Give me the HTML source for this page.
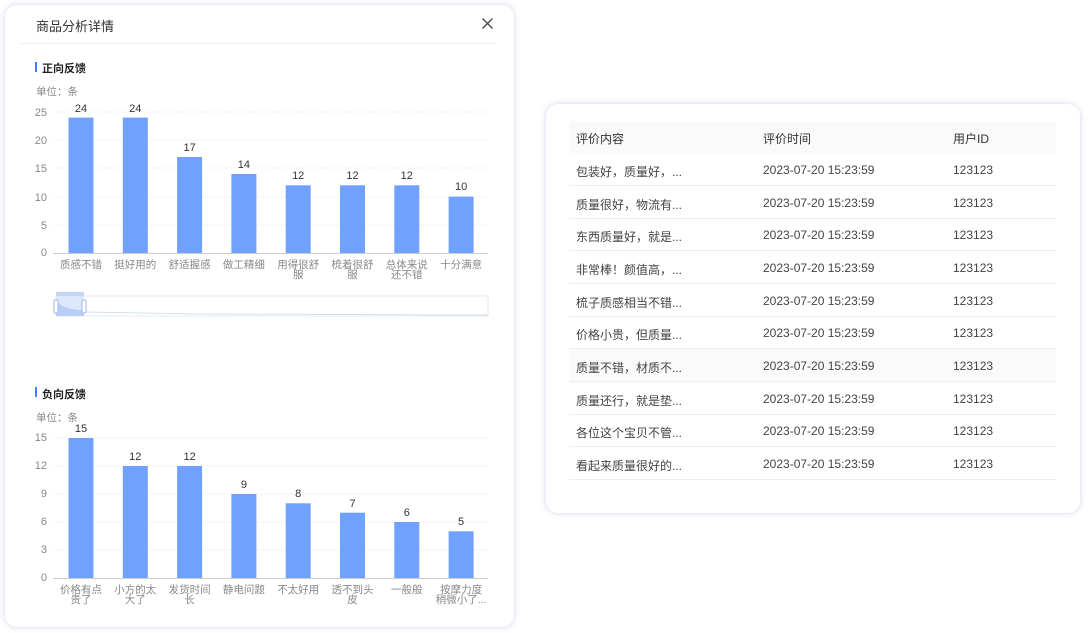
<!DOCTYPE html>
<html><head><meta charset="utf-8"><style>
*{margin:0;padding:0;box-sizing:border-box}
body{width:1088px;height:633px;background:#fff;font-family:"Liberation Sans","Noto Sans CJK SC",sans-serif;position:relative;overflow:hidden;color:#333}
.card{position:absolute;background:#fff;border-radius:12px;box-shadow:0 0 6px rgba(120,130,190,.35)}
.a{position:absolute;white-space:nowrap}
.row{position:absolute;left:569px;width:487px;height:33px;border-bottom:1px solid #eeeeee;font-size:12px;color:#444}
.row span{position:absolute;top:10px}
</style></head><body>
<div class="card" style="left:5px;top:5px;width:509px;height:622px"></div>
<div class="a" style="left:36px;top:16px;font-size:13px;color:#333">商品分析详情</div>
<svg class="a" style="left:481px;top:17px" width="13" height="13"><path d="M1.5 1.5L11.5 11.5M11.5 1.5L1.5 11.5" stroke="#444" stroke-width="1.3"/></svg>
<div class="a" style="left:20px;top:43px;width:476px;height:1px;background:#efefef"></div>
<div class="a" style="left:35px;top:62px;width:2px;height:10px;background:#3b7cff"></div>
<div class="a" style="left:42px;top:60px;font-size:11px;font-weight:bold;color:#222">正向反馈</div>
<div class="a" style="left:36px;top:84px;font-size:10.5px;color:#888">单位：条</div>
<div class="a" style="left:35px;top:387px;width:2px;height:10px;background:#3b7cff"></div>
<div class="a" style="left:42px;top:386px;font-size:11px;font-weight:bold;color:#222">负向反馈</div>
<div class="a" style="left:36px;top:410px;font-size:10.5px;color:#888">单位：条</div>
<svg class="a" style="left:0;top:0" width="520" height="633" font-family="Liberation Sans,Noto Sans CJK SC,sans-serif">
<g stroke="#f0f0f0" stroke-dasharray="2,1">
<line x1="53" x2="488" y1="112" y2="112"/><line x1="53" x2="488" y1="140" y2="140"/><line x1="53" x2="488" y1="168" y2="168"/><line x1="53" x2="488" y1="197" y2="197"/><line x1="53" x2="488" y1="225" y2="225"/>
<line x1="53" x2="488" y1="438" y2="438"/><line x1="53" x2="488" y1="466" y2="466"/><line x1="53" x2="488" y1="494" y2="494"/><line x1="53" x2="488" y1="522" y2="522"/><line x1="53" x2="488" y1="550" y2="550"/>
</g>
<line x1="53" x2="488" y1="253.5" y2="253.5" stroke="#ccc"/>
<line x1="53" x2="488" y1="578.5" y2="578.5" stroke="#ccc"/>
<g font-size="11" fill="#888" text-anchor="end">
<text x="47" y="116">25</text><text x="47" y="144">20</text><text x="47" y="172">15</text><text x="47" y="201">10</text><text x="47" y="229">5</text><text x="47" y="256">0</text>
<text x="47" y="441">15</text><text x="47" y="469">12</text><text x="47" y="497">9</text><text x="47" y="525">6</text><text x="47" y="553">3</text><text x="47" y="581">0</text>
</g>
<g fill="#70a1ff">
<rect x="68.5" y="117.6" width="25" height="135.4"/><rect x="122.8" y="117.6" width="25" height="135.4"/><rect x="177.1" y="157" width="25" height="96"/><rect x="231.4" y="174" width="25" height="79"/><rect x="285.7" y="185.3" width="25" height="67.7"/><rect x="340" y="185.3" width="25" height="67.7"/><rect x="394.3" y="185.3" width="25" height="67.7"/><rect x="448.6" y="196.6" width="25" height="56.4"/>
<rect x="68.5" y="438" width="25" height="140"/><rect x="122.8" y="466" width="25" height="112"/><rect x="177.1" y="466" width="25" height="112"/><rect x="231.4" y="494" width="25" height="84"/><rect x="285.7" y="503.3" width="25" height="74.7"/><rect x="340" y="512.7" width="25" height="65.3"/><rect x="394.3" y="522" width="25" height="56"/><rect x="448.6" y="531.3" width="25" height="46.7"/>
</g>
<g font-size="11" fill="#333" text-anchor="middle">
<text x="81" y="112">24</text><text x="135.3" y="112">24</text><text x="189.6" y="151">17</text><text x="243.9" y="168">14</text><text x="298.2" y="179">12</text><text x="352.5" y="179">12</text><text x="406.8" y="179">12</text><text x="461.1" y="190">10</text>
<text x="81" y="432">15</text><text x="135.3" y="460">12</text><text x="189.6" y="460">12</text><text x="243.9" y="488">9</text><text x="298.2" y="497">8</text><text x="352.5" y="507">7</text><text x="406.8" y="516">6</text><text x="461.1" y="525">5</text>
</g>
<g font-size="10.5" fill="#888" text-anchor="middle">
<text x="81" y="268">质感不错</text><text x="135.3" y="268">挺好用的</text><text x="189.6" y="268">舒适握感</text><text x="243.9" y="268">做工精细</text><text x="298.2" y="268">用得很舒</text><text x="298.2" y="278">服</text><text x="352.5" y="268">梳着很舒</text><text x="352.5" y="278">服</text><text x="406.8" y="268">总体来说</text><text x="406.8" y="278">还不错</text><text x="461.1" y="268">十分满意</text>
<text x="81" y="593">价格有点</text><text x="81" y="603">贵了</text><text x="135.3" y="593">小方的太</text><text x="135.3" y="603">大了</text><text x="189.6" y="593">发货时间</text><text x="189.6" y="603">长</text><text x="243.9" y="593">静电问题</text><text x="298.2" y="593">不太好用</text><text x="352.5" y="593">透不到头</text><text x="352.5" y="603">皮</text><text x="406.8" y="593">一般般</text><text x="461.1" y="593">按摩力度</text><text x="461.1" y="603">稍微小了...</text>
</g>
<rect x="56" y="296" width="432" height="20" fill="none" stroke="#e3e9f5"/>
<path d="M56 300 Q62 310 84 312 L200 314 L488 315" fill="none" stroke="#d5def0"/>
<rect x="56" y="292" width="28" height="24" fill="#d4e2fd" opacity=".8"/>
<rect x="56" y="292" width="28" height="4" fill="#c5d6f5"/>
<path d="M56 300 Q62 310 84 310 L84 316 L56 316Z" fill="#b9cff8"/>
<rect x="54" y="300" width="4" height="13" rx="1" fill="#fff" stroke="#9fb6e0"/>
<rect x="82" y="300" width="4" height="13" rx="1" fill="#fff" stroke="#9fb6e0"/>
</svg>
<div class="card" style="left:546px;top:104px;width:534px;height:409px"></div>
<div class="a" style="left:569px;top:121px;width:487px;height:32px;background:#fafafa;font-size:12px;color:#333">
<span class="a" style="left:7px;top:9px">评价内容</span><span class="a" style="left:194px;top:9px">评价时间</span><span class="a" style="left:384px;top:9px">用户ID</span></div>
<div class="row" style="top:153px"><span style="left:7px">包装好，质量好，...</span><span style="left:194px">2023-07-20 15:23:59</span><span style="left:384px">123123</span></div>
<div class="row" style="top:186px"><span style="left:7px">质量很好，物流有...</span><span style="left:194px">2023-07-20 15:23:59</span><span style="left:384px">123123</span></div>
<div class="row" style="top:218px"><span style="left:7px">东西质量好，就是...</span><span style="left:194px">2023-07-20 15:23:59</span><span style="left:384px">123123</span></div>
<div class="row" style="top:251px"><span style="left:7px">非常棒！颜值高，...</span><span style="left:194px">2023-07-20 15:23:59</span><span style="left:384px">123123</span></div>
<div class="row" style="top:284px"><span style="left:7px">梳子质感相当不错...</span><span style="left:194px">2023-07-20 15:23:59</span><span style="left:384px">123123</span></div>
<div class="row" style="top:316px"><span style="left:7px">价格小贵，但质量...</span><span style="left:194px">2023-07-20 15:23:59</span><span style="left:384px">123123</span></div>
<div class="row" style="top:349px;background:#fafafa"><span style="left:7px">质量不错，材质不...</span><span style="left:194px">2023-07-20 15:23:59</span><span style="left:384px">123123</span></div>
<div class="row" style="top:382px"><span style="left:7px">质量还行，就是垫...</span><span style="left:194px">2023-07-20 15:23:59</span><span style="left:384px">123123</span></div>
<div class="row" style="top:414px"><span style="left:7px">各位这个宝贝不管...</span><span style="left:194px">2023-07-20 15:23:59</span><span style="left:384px">123123</span></div>
<div class="row" style="top:447px"><span style="left:7px">看起来质量很好的...</span><span style="left:194px">2023-07-20 15:23:59</span><span style="left:384px">123123</span></div>
</body></html>
